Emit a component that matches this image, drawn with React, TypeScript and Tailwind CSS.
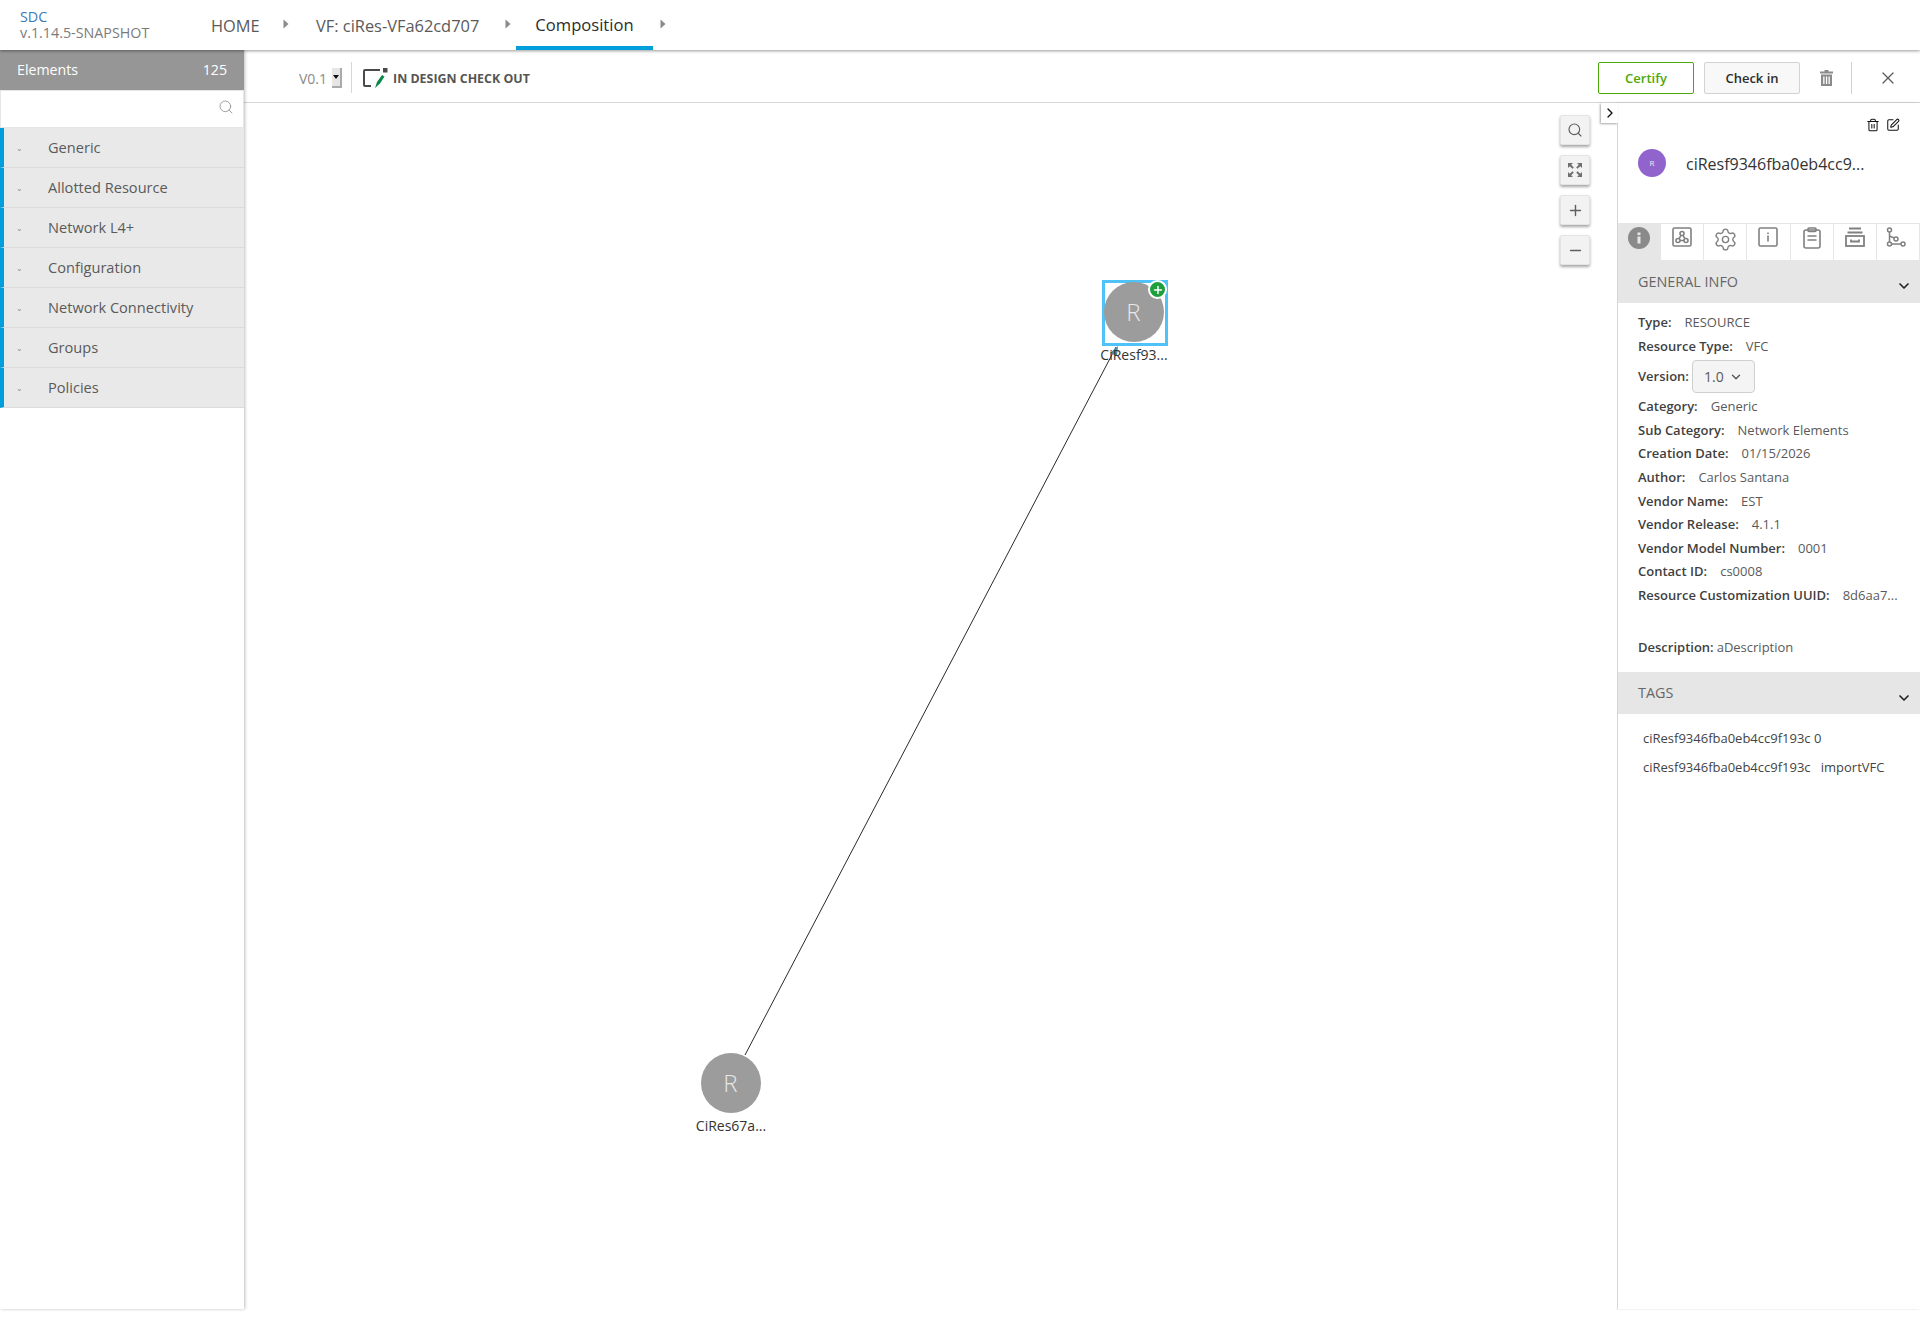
import React from "react";
import { Search, X, ChevronRight, ChevronDown, Plus, Minus, SquarePen, Settings, Trash2 } from "lucide-react";

const categories = ["Generic", "Allotted Resource", "Network L4+", "Configuration", "Network Connectivity", "Groups", "Policies"];

const info: [string, string][] = [
  ["Type:", "RESOURCE"],
  ["Resource Type:", "VFC"],
];
const info2: [string, string][] = [
  ["Category:", "Generic"],
  ["Sub Category:", "Network Elements"],
  ["Creation Date:", "01/15/2026"],
  ["Author:", "Carlos Santana"],
  ["Vendor Name:", "EST"],
  ["Vendor Release:", "4.1.1"],
  ["Vendor Model Number:", "0001"],
  ["Contact ID:", "cs0008"],
  ["Resource Customization UUID:", "8d6aa7..."],
];

function Crumb() {
  return (
    <svg width="6" height="10" viewBox="0 0 6 10" className="mb-[4px] shrink-0">
      <path d="M0.5 0.5 L5.5 5 L0.5 9.5 Z" fill="#8a8a8a" />
    </svg>
  );
}

function ZoomBtn({ children }: { children: React.ReactNode }) {
  return (
    <div className="flex h-[30px] w-[30px] items-center justify-center rounded-[2px] border border-[#e4e4e4] bg-[#f2f2f2] shadow-[0_2px_3px_rgba(0,0,0,0.35)] text-[#5f5f5f]">
      {children}
    </div>
  );
}

function Tab({ active, children }: { active?: boolean; children: React.ReactNode }) {
  return (
    <div className={`flex h-[36px] flex-1 justify-center border-r border-[#e6e6e6] pt-[3px] ${active ? "bg-[#e6e6e6]" : "bg-white"}`}>
      {children}
    </div>
  );
}

export default function App() {
  return (
    <div className="flex h-[1319px] w-[1920px] flex-col overflow-hidden bg-white text-[#5a5a5a] [font-family:'Open_Sans',sans-serif]">
      <header className="relative z-20 flex h-[50px] shrink-0 items-stretch bg-white shadow-[0_1px_3px_rgba(0,0,0,0.4)]">
        <div className="w-[211px] pl-[20px] pt-[9px] text-[14.3px] leading-[16px]">
          <div className="text-[#3a7cb8]">SDC</div>
          <div className="text-[#7b7b7b]">v.1.14.5-SNAPSHOT</div>
        </div>
        <nav className="flex items-center pt-[2px] text-[16.4px] text-[#5a5a5a]">
          <span className="w-[72px]">HOME</span>
          <Crumb />
          <span className="ml-[27px] w-[189px]">VF: ciRes-VFa62cd707</span>
          <Crumb />
          <div className="ml-[5px] -mt-[2px] flex h-[50px] w-[137px] items-center justify-center border-b-[4px] border-[#009fdb] pt-[4px] text-[16.6px] font-medium text-[#2d2d2d]">
            Composition
          </div>
          <span className="ml-[7px]"><Crumb /></span>
        </nav>
      </header>

      <div className="flex flex-1">
        <aside className="relative z-10 flex h-[1259px] w-[244px] shrink-0 flex-col bg-white shadow-[1px_0_3px_rgba(0,0,0,0.25)]">
          <div className="flex h-[40px] items-center justify-between bg-[#969696] pl-[17px] pr-[17px] text-[14.2px] text-white">
            <span>Elements</span>
            <span>125</span>
          </div>
          <div className="flex h-[38px] items-center justify-end border border-[#e6e6e6] pb-[4px] pr-[9px] text-[#8f8f8f]">
            <Search size={16} strokeWidth={1.25} />
          </div>
          {categories.map((c) => (
            <div key={c} className="flex h-[40px] items-center border-b border-l-[4px] border-b-[#dcdcdc] border-l-[#009fdb] bg-[#e9e9e9] text-[14.6px] text-[#5a5a5a]">
              <span className="ml-[12px] w-[32px] text-[8px] text-[#8a8a8a]">⌄</span>
              <span>{c}</span>
            </div>
          ))}
        </aside>

        <main className="flex min-w-0 flex-1 flex-col">
          <div className="flex h-[53px] shrink-0 items-center border-b border-[#d6d6d6] bg-white pl-[55px] pr-[22px] pt-[3px]">
            <span className="mt-[2px] text-[14px] text-[#8a8a8a]">V0.1</span>
            <div className="ml-[5px] flex h-[20px] w-[10px] items-center justify-center border-r-2 border-b-2 border-[#aaa] bg-[#e6e6e6]">
              <svg width="6" height="4" viewBox="0 0 6 4"><path d="M0 0H6L3 4Z" fill="#111" /></svg>
            </div>
            <div className="ml-[9px] mr-[10px] h-[31px] w-px bg-[#d6d6d6]" />
            <svg width="26" height="20" viewBox="0 0 26 20" className="mr-[5px] shrink-0">
              <path d="M18 2H3a1 1 0 0 0-1 1v14a1 1 0 0 0 1 1h6" fill="none" stroke="#4a4a4a" strokeWidth="2" />
              <rect x="21" y="0" width="4.5" height="4.5" fill="#4a4a4a" />
              <path d="M13 20 L15 14 L20 7 L22.5 8.5 L18 15.5 Z" fill="#0a8a4a" />
            </svg>
            <span className="mt-[3px] text-[12.4px] font-bold text-[#555]">IN DESIGN CHECK OUT</span>
            <div className="ml-auto flex items-center">
              <button className="h-[32px] w-[96px] rounded-[2px] border border-[#4ca90c] bg-white pt-[2px] text-[13px] font-semibold text-[#4ca90c]">Certify</button>
              <button className="ml-[10px] h-[32px] w-[96px] rounded-[2px] border border-[#d2d2d2] bg-[#f8f8f8] pt-[2px] text-[13px] font-semibold text-[#2d2d2d]">Check in</button>
              <svg width="13" height="16" viewBox="0 0 13 16" className="ml-[20px] shrink-0">
                <path d="M4.5 0h4v1.5h4.5v2H0v-2h4.5z" fill="#8a8a8a" />
                <path d="M1 4.5h11V16H1zM3.2 6.5v7.5h1.3V6.5zM5.9 6.5v7.5h1.3V6.5zM8.5 6.5v7.5h1.3V6.5z" fill="#8a8a8a" fillRule="evenodd" />
              </svg>
              <div className="ml-[18px] mr-[26px] h-[32px] w-px bg-[#d2d2d2]" />
              <X size={20} strokeWidth={1.5} className="text-[#5a5a5a]" />
            </div>
          </div>

          <div className="flex flex-1">
            <div className="relative h-[1206px] min-w-0 flex-1 bg-white">
              <svg width="1373" height="1206" className="absolute left-0 top-0">
                <line x1="501" y1="952" x2="872" y2="244" stroke="#2a2a2a" strokeWidth="1" />
                <path d="M874 243 L866 250 L873 253 Z" fill="#4a8aa8" />
              </svg>

              <div className="absolute left-[858px] top-[177px] h-[66px] w-[66px] border-[3px] border-[#4fc3f7]" />
              <div className="absolute left-[860px] top-[179px] flex h-[60px] w-[60px] items-center justify-center rounded-full bg-[#9c9c9c] pr-[1px] text-[24px] font-light text-[#e8e8e8]">R</div>
              <div className="absolute left-[904px] top-[177px] flex h-[19px] w-[19px] items-center justify-center rounded-full border-2 border-white bg-[#1f9e3d] text-white">
                <Plus size={12} strokeWidth={3} />
              </div>
              <div className="absolute left-[840px] top-[242px] w-[100px] text-center text-[14px] leading-[20px] text-[#333]">CiResf93...</div>

              <div className="absolute left-[457px] top-[950px] flex h-[60px] w-[60px] items-center justify-center rounded-full bg-[#9c9c9c] pr-[1px] text-[24px] font-light text-[#e8e8e8]">R</div>
              <div className="absolute left-[437px] top-[1013px] w-[100px] text-center text-[14px] leading-[20px] text-[#333]">CiRes67a...</div>

              <div className="absolute right-[27px] top-[12px] flex flex-col gap-[10px]">
                <ZoomBtn><Search size={16} strokeWidth={1.75} /></ZoomBtn>
                <ZoomBtn>
                  <svg width="16" height="16" viewBox="0 0 16 16" fill="#6f6f6f">
                    <path d="M1 1h5L4.2 2.8 6.8 5.4 5.4 6.8 2.8 4.2 1 6zM15 1v5l-1.8-1.8-2.6 2.6-1.4-1.4 2.6-2.6L10 1zM1 15v-5l1.8 1.8 2.6-2.6 1.4 1.4-2.6 2.6L6 15zM15 15h-5l1.8-1.8-2.6-2.6 1.4-1.4 2.6 2.6L15 10z" />
                  </svg>
                </ZoomBtn>
                <ZoomBtn><Plus size={17} strokeWidth={2} /></ZoomBtn>
                <ZoomBtn><Minus size={17} strokeWidth={2} /></ZoomBtn>
              </div>
              <div className="absolute right-[-1px] top-0 z-10 flex h-[20px] w-[17px] items-center justify-center bg-white shadow-[-1px_1px_2px_rgba(0,0,0,0.35)] text-[#111]">
                <ChevronRight size={16} strokeWidth={2} />
              </div>
            </div>

            <section className="flex h-[1206px] w-[303px] shrink-0 flex-col border-l border-[#d6d6d6] bg-white shadow-[-1px_0_2px_rgba(0,0,0,0.15)]">
              <div className="flex h-[120px] flex-col">
                <div className="flex justify-end gap-[6px] pr-[20px] pt-[15px] text-[#111]">
                  <Trash2 size={14} strokeWidth={1.75} />
                  <SquarePen size={14} strokeWidth={1.75} />
                </div>
                <div className="mt-[17px] flex items-center pl-[20px]">
                  <div className="flex h-[28px] w-[28px] items-center justify-center rounded-full bg-[#9063cd] text-[8px] text-[#eee]">R</div>
                  <span className="ml-[20px] mt-[2px] text-[16px] text-[#333]">ciResf9346fba0eb4cc9...</span>
                </div>
              </div>

              <div className="flex border-y border-[#e6e6e6]">
                <Tab active>
                  <svg width="22" height="22" viewBox="0 0 22 22">
                    <circle cx="11" cy="11" r="11" fill="#8a8a8a" />
                    <rect x="9.5" y="9.5" width="3" height="7" fill="#e6e6e6" />
                    <rect x="9.5" y="5.5" width="3" height="2.6" fill="#e6e6e6" />
                  </svg>
                </Tab>
                <Tab>
                  <svg width="20" height="20" viewBox="0 0 20 20" fill="none" stroke="#808080" strokeWidth="1.6">
                    <rect x="1" y="1" width="18" height="18" rx="1.5" />
                    <circle cx="10" cy="6.5" r="2" />
                    <circle cx="6" cy="13.5" r="2" />
                    <circle cx="14" cy="13.5" r="2" />
                    <path d="M9 8.3 7 11.8M11 8.3l2 3.5M8 13.5h4" />
                  </svg>
                </Tab>
                <Tab><Settings size={25} strokeWidth={1.35} className="text-[#808080]" /></Tab>
                <Tab>
                  <svg width="20" height="20" viewBox="0 0 20 20" fill="none" stroke="#808080" strokeWidth="1.6">
                    <rect x="1" y="1" width="18" height="18" rx="1.5" />
                    <path d="M10 8.5v6M10 5.5v1.6" />
                  </svg>
                </Tab>
                <Tab>
                  <svg width="18" height="22" viewBox="0 0 18 22" fill="none" stroke="#808080" strokeWidth="1.6">
                    <rect x="1" y="3" width="16" height="18" rx="2" />
                    <rect x="5" y="1" width="8" height="3.5" rx="1" />
                    <path d="M4.5 9h9M4.5 13h9" />
                  </svg>
                </Tab>
                <Tab>
                  <svg width="20" height="20" viewBox="0 0 20 20" fill="none" stroke="#808080" strokeWidth="1.8">
                    <path d="M4 1.5h12M2.5 5.5h15" />
                    <rect x="1" y="9" width="18" height="10" />
                    <path d="M6 12.5v2h8v-2" />
                  </svg>
                </Tab>
                <Tab>
                  <svg width="20" height="21" viewBox="0 0 20 21" fill="none" stroke="#808080" strokeWidth="1.5" className="mr-[4px]">
                    <circle cx="3.5" cy="3" r="2" />
                    <circle cx="3.5" cy="17" r="2" />
                    <circle cx="17" cy="17" r="2" />
                    <circle cx="10" cy="12" r="2" />
                    <path d="M3.5 5v10M5.5 17H15M3.5 9 8.2 11" />
                  </svg>
                </Tab>
              </div>

              <div className="flex h-[42px] justify-between bg-[#e6e6e6] pl-[20px] pr-[8px]">
                <span className="mt-[10px] text-[14.4px] font-medium text-[#666]">GENERAL INFO</span>
                <ChevronDown size={16} strokeWidth={2.5} className="mt-[17px] text-[#222]" />
              </div>

              <div className="px-[20px] pt-[8px] text-[13px] text-[#5a5a5a]">
                {info.map(([k, v]) => (
                  <div key={k} className="flex h-[23.6px] items-center">
                    <span className="mr-[13px] font-semibold text-[#3f3f3f]">{k}</span>
                    <span>{v}</span>
                  </div>
                ))}
                <div className="flex h-[37px] items-center">
                  <span className="mr-[3px] font-semibold text-[#3f3f3f]">Version:</span>
                  <div className="flex h-[33px] w-[63px] items-center justify-center gap-[5px] rounded-[4px] border border-[#cfcfcf] bg-[#f4f4f4] text-[14px]">
                    1.0 <ChevronDown size={14} strokeWidth={2.5} />
                  </div>
                </div>
                {info2.map(([k, v]) => (
                  <div key={k} className="flex h-[23.6px] items-center whitespace-nowrap">
                    <span className="mr-[13px] font-semibold text-[#3f3f3f]">{k}</span>
                    <span>{v}</span>
                  </div>
                ))}
                <div className="mt-[30px] flex h-[20px] items-center">
                  <span className="mr-[3px] font-semibold text-[#3f3f3f]">Description:</span>
                  <span>aDescription</span>
                </div>
              </div>

              <div className="mt-[14px] flex h-[42px] justify-between bg-[#e6e6e6] pl-[20px] pr-[8px]">
                <span className="mt-[10px] text-[14.4px] font-medium text-[#666]">TAGS</span>
                <ChevronDown size={16} strokeWidth={2.5} className="mt-[18px] text-[#222]" />
              </div>
              <div className="pl-[25px] pt-[10px] text-[13px] leading-[29px] text-[#444]">
                <div>ciResf9346fba0eb4cc9f193c 0</div>
                <div>ciResf9346fba0eb4cc9f193c&nbsp;&nbsp; importVFC</div>
              </div>
            </section>
          </div>
        </main>
      </div>
    </div>
  );
}
